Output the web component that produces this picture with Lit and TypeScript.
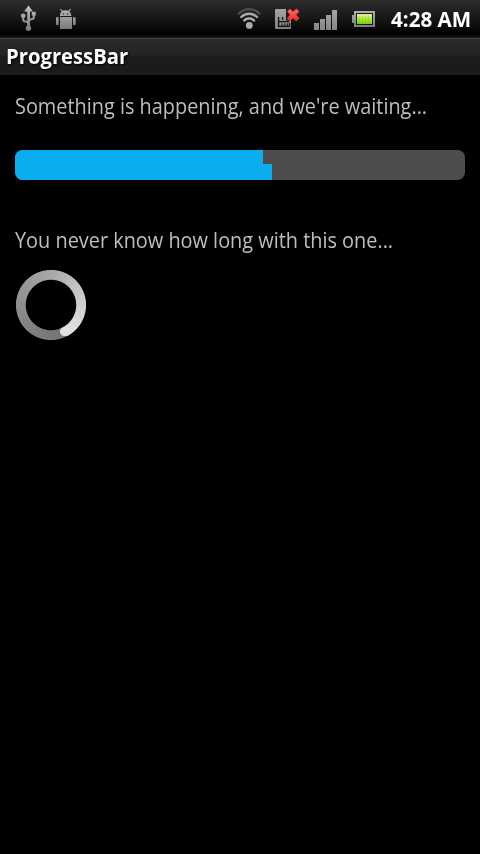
import { LitElement, html, css, svg } from "lit";
import { customElement, property } from "lit/decorators.js";

@customElement("status-bar")
class StatusBar extends LitElement {
  static styles = css`
    :host {
      display: block;
      height: 38px;
      background: linear-gradient(#2d2d2d 0, #1c1c1c 14px, #0d0d0d 26px, #000 34px, #020202 35px, #1a1a1a 38px);
    }
    .row { display: flex; height: 38px; align-items: flex-start; }
    svg { display: block; flex: none; }
    .usb { margin: 5px 0 0 20px; }
    .droid { margin: 8px 0 0 19px; }
    .wifi { margin: 7px 0 0 auto; }
    .sim { margin: 8px 0 0 14px; }
    .signal { margin: 10px 0 0 14px; }
    .battery { margin: 11px 0 0 15px; }
    .clock {
      flex: none;
      width: 80px;
      margin: 4px 9px 0 16px;
      font: bold 21px/30px "Open Sans", "Noto Sans", sans-serif;
      color: #fff;
      white-space: nowrap;
    }
    .clock span { display: inline-block; transform-origin: 0 0; transform: scaleX(0.98); }
  `;

  render() {
    const bars = [7, 11, 15, 20];
    return html`<div class="row">
      <svg class="usb" width="16" height="27" viewBox="0 0 16 27">
        <defs><linearGradient id="g" x1="0" y1="0" x2="0" y2="27" gradientUnits="userSpaceOnUse">
          <stop offset="0" stop-color="#c4c4c4" /><stop offset="1" stop-color="#747474" /></linearGradient></defs>
        <g fill="url(#g)">
          <path d="M8.5 0.5 13 6.5H4z" />
          <rect x="7.2" y="5" width="2.8" height="18" />
          <circle cx="8.5" cy="23.2" r="2.7" />
          <circle cx="3.2" cy="10.8" r="2.4" />
          <rect x="11.8" y="6.8" width="4" height="3.8" />
        </g>
        <path d="M3.2 11V14.5Q3.2 16.5 5.5 16.6Q8.5 16.8 8.5 19M13.8 9V12.2Q13.8 14 11.4 14.2Q8.5 14.4 8.5 16.5" fill="none" stroke="url(#g)" stroke-width="2" />
      </svg>
      <svg class="droid" width="22" height="22" viewBox="0 0 22 22">
        <defs><linearGradient id="d" x1="0" y1="0" x2="0" y2="22" gradientUnits="userSpaceOnUse">
          <stop offset="0" stop-color="#b8b8b8" /><stop offset="1" stop-color="#777" /></linearGradient></defs>
        <path d="M5.5 1 7.6 4M15.5 1 13.4 4" stroke="#aaa" stroke-width="1.3" />
        <path d="M4.8 8Q5.2 2.2 10.5 2.2T16.4 8z" fill="url(#d)" />
        <path d="M5 9H17V21H5zM1 10.2Q1 9 2.2 9T3.6 10.2V16Q3.6 17.2 2.3 17.2T1 16zM18 10.2Q18 9 19.2 9T20.6 10.2V16Q20.6 17.2 19.3 17.2T18 16z" fill="url(#d)" />
        <path d="M8 5.2h1.2v1.2H8zM12.2 5.2h1.2v1.2h-1.2z" fill="#222" />
      </svg>
      <svg class="wifi" width="24" height="24" viewBox="0 0 24 24">
        <g fill="none" stroke-linecap="round">
          <path d="M2 6.6Q6.2 2.2 12.2 2.2T22.2 6.6" stroke="#505050" stroke-width="2.2" />
          <path d="M4.3 10Q7.5 6.7 12.2 6.7T20 10" stroke="#aaa" stroke-width="2.4" />
          <path d="M7.3 13.5Q9.3 11.4 12.2 11.4T17 13.5" stroke="#b2b2b2" stroke-width="2.4" />
        </g>
        <circle cx="12.3" cy="18.4" r="3.4" fill="#aaa" />
      </svg>
      <svg class="sim" width="25" height="22" viewBox="0 0 25 22">
        <defs><linearGradient id="s" x1="0" y1="0" x2="0" y2="22" gradientUnits="userSpaceOnUse">
          <stop offset="0" stop-color="#a6a6a6" /><stop offset="1" stop-color="#808080" /></linearGradient>
        <linearGradient id="x" x1="0" y1="0" x2="0" y2="13" gradientUnits="userSpaceOnUse">
          <stop offset="0" stop-color="#ff7672" /><stop offset="1" stop-color="#ee2420" /></linearGradient></defs>
        <path d="M0 2Q0 1 1 1H11V9H13V12H16V20Q16 21 15 21H1Q0 21 0 20z" fill="url(#s)" />
        <path d="M3.6 9V13.6H13.5V10M7.6 9V12M3.6 13.6V18.4H14.5V15" fill="none" stroke="#121212" stroke-width="1.3" />
        <path d="M7 15.4V18.4M9.8 15.4V18.4M12.4 15.4V18.4" stroke="#121212" stroke-width="1" />
        <path d="M11 8.6H13.5L16 12.6H11z" fill="#121212" />
        <path d="M12.5 3.5 15 1 18 4 21.3 1 24 3.6 20.8 6.9 24 10 21.3 13 18 9.8 14.8 13 12.2 10.3 15.3 7z" fill="url(#x)" stroke="#e03a36" stroke-width="1" stroke-linejoin="round" />
      </svg>
      <svg class="signal" width="23" height="20" viewBox="0 0 23 20">
        <defs><linearGradient id="b" x1="0" y1="0" x2="0" y2="20" gradientUnits="userSpaceOnUse">
          <stop offset="0" stop-color="#a8a8a8" /><stop offset="1" stop-color="#858585" /></linearGradient></defs>
        ${bars.map((h, i) => svg`<rect x=${i * 6} y=${20 - h} width="5" height=${h} fill="url(#b)" />`)}
      </svg>
      <svg class="battery" width="23" height="16" viewBox="0 0 23 16">
        <defs><linearGradient id="f" x1="0" y1="0" x2="0" y2="1">
          <stop offset="0" stop-color="#e6f8a8" /><stop offset=".45" stop-color="#b2e63c" /><stop offset="1" stop-color="#7ed000" /></linearGradient>
        <linearGradient id="c" x1="0" y1="0" x2="0" y2="1">
          <stop offset="0" stop-color="#b0b0b0" /><stop offset="1" stop-color="#7c7c7c" /></linearGradient></defs>
        <path d="M2 0H23V16H2V12H0V4H2z" fill="url(#c)" />
        <rect x="4" y="2" width="17" height="12" fill="#171717" />
        <rect x="5" y="3" width="15" height="10" fill="url(#f)" />
        <path d="M7.5 3V13M10.5 3V13M13.5 3V13M16.5 3V13" stroke="#4c8c00" stroke-opacity=".14" />
      </svg>
      <div class="clock"><span>4:28 AM</span></div>
    </div>`;
  }
}

@customElement("progress-bar")
class ProgressBar extends LitElement {
  @property({ type: Number }) primary = 55;
  @property({ type: Number }) secondary = 57;
  static styles = css`
    :host { display: grid; grid-template-rows: 14px 16px; height: 30px; border-radius: 7.5px; overflow: hidden; background: #4d4d4d; }
    .fill { background: #0aaeef; }
  `;
  render() {
    return html`<div class="fill" style="width:${this.primary}px"></div>
      <div class="fill" style="width:${this.secondary}px"></div>`;
  }
}

@customElement("busy-spinner")
class BusySpinner extends LitElement {
  static styles = css`
    :host { display: block; width: 72px; height: 72px; position: relative; }
    .ring {
      width: 72px; height: 72px; border-radius: 50%;
      background: conic-gradient(from 152deg, #737373 0deg, #808080 70deg, #919191 130deg, #a8a8a8 208deg, #c6c6c6 270deg, #dadada 330deg, #e2e2e2 360deg);
      -webkit-mask: radial-gradient(circle at center, transparent 24.7px, #000 25.7px, #000 34.6px, transparent 35.5px);
      mask: radial-gradient(circle at center, transparent 24.7px, #000 25.7px, #000 34.6px, transparent 35.5px);
    }
    .cap { position: absolute; left: 45.4px; top: 58px; width: 9.4px; height: 9.4px; border-radius: 50%; background: #e1e1e1; }
  `;
  render() {
    return html`<div class="ring"></div><div class="cap"></div>`;
  }
}

@customElement("app-root")
class AppRoot extends LitElement {
  static styles = css`
    :host {
      display: block;
      height: 854px;
      overflow: hidden;
      background: #000;
      font: 21px/28px "Open Sans", "Noto Sans", sans-serif;
      color: #bebebe;
    }
    .title {
      box-sizing: border-box;
      height: 37px;
      padding: 3px 6px 0;
      border-top: 1px solid #434343;
      background: linear-gradient(#2a2a2a, #232323 17px, #1b1b1b 18px, #1b1b1b);
      font-weight: bold;
      color: #fff;
      text-shadow: 1px 1px 2px #000;
      white-space: nowrap;
    }
    .title span, .label span { display: inline-block; transform-origin: 0 0; }
    .title span { transform: scaleX(0.964); }
    .content { padding: 17px 15px 0; }
    .label { height: 28px; white-space: nowrap; }
    .label span { transform: scaleX(0.947); }
    progress-bar { margin: 30px 0 46px; }
    busy-spinner { margin-top: 15px; }
  `;
  render() {
    return html`
      <status-bar></status-bar>
      <div class="title"><span>ProgressBar</span></div>
      <div class="content">
        <div class="label"><span>Something is happening, and we're waiting...</span></div>
        <progress-bar .primary=${248} .secondary=${257}></progress-bar>
        <div class="label"><span>You never know how long with this one...</span></div>
        <busy-spinner></busy-spinner>
      </div>
    `;
  }
}
